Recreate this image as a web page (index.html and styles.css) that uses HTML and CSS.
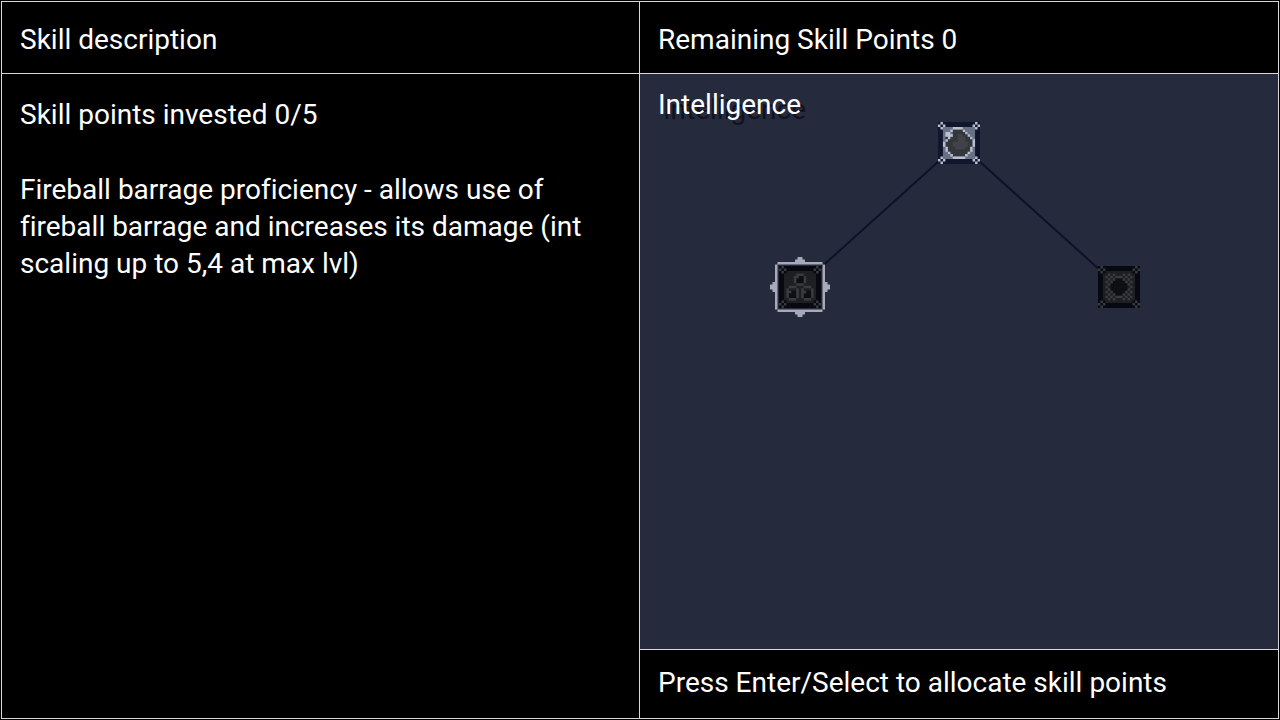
FILE: index.html
```
<!DOCTYPE html>
<html lang="en">
<head>
    <meta charset="UTF-8">
    <meta name="viewport" content="width=device-width, initial-scale=1.0">
    <title>Skill Tree</title>
    <link rel="stylesheet" href="styles.css">
</head>
<body>
    <main class="screen">
        <section class="panel description">
            <h1 class="bar">Skill description</h1>
            <div class="details">
                <p>Skill points invested 0/5</p>
                <p>Fireball barrage proficiency - allows use of fireball barrage and increases its damage (int scaling up to 5,4 at max lvl)</p>
            </div>
        </section>

        <section class="panel">
            <h2 class="bar">Remaining Skill Points 0</h2>
            <div class="tree">
                <h3 class="tree-title">Intelligence</h3>
                <svg class="links" aria-hidden="true">
                    <line x1="50%" y1="12%" x2="25%" y2="37%"/>
                    <line x1="50%" y1="12%" x2="75%" y2="37%"/>
                </svg>

                <button class="node fireball" aria-label="Fireball">
                    <svg viewBox="0 0 17 17">
                        <path class="frame" d="M0 0h17v17h-17z"/>
                        <path class="plate" d="M2 2h13v13h-13z"/>
                        <path class="ball" d="M6 3h5v1h1v1h1v1h1v5h-1v1h-1v1h-1v1h-5v-1h-1v-1h-1v-1h-1v-5h3v-2h-1z"/>
                        <path class="core" d="M8 5h2v1h1v2h1v2h-1v1h-4v-1h-1v-2h2z"/>
                        <path class="line" d="M6 2.5h4M5 3.5h1M10 3.5h1M3 4.5h2M11 4.5h1M3 5.5h3M12 5.5h1M4 6.5h1M13 6.5h1M3 7.5h1M14 7.5h1M2 8.5h1M14 8.5h1M2 9.5h1M14 9.5h1M3 10.5h1M13 10.5h1M3 11.5h1M13 11.5h1M4 12.5h1M12 12.5h1M5 13.5h1M11 13.5h1M6 14.5h5"/>
                        <path class="line" d="M1 .5h1M0 1.5h1M2 1.5h1M1 2.5h1M15 .5h1M14 1.5h1M16 1.5h1M15 2.5h1M1 14.5h1M0 15.5h1M2 15.5h1M1 16.5h1M15 14.5h1M14 15.5h1M16 15.5h1M15 16.5h1"/>
                    </svg>
                </button>

                <button class="node locked barrage" aria-label="Fireball barrage">
                    <svg viewBox="0 0 17 17">
                        <path class="frame" d="M0 0h17v17h-17z"/>
                        <path class="plate" d="M3 2h11v1h1v11h-1v1h-11v-1h-1v-11h1z"/>
                        <path class="ball" d="M7 4h3v3h-3zM4 10h3v3h-3zM10 10h3v3h-3z"/>
                        <path class="line" d="M7 3.5h3M6 4.5h2M10 4.5h1M6 5.5h1M10 5.5h1M6 6.5h1M10 6.5h1M7 7.5h3M4 8.5h3M10 8.5h3M3 9.5h1M7 9.5h1M9 9.5h1M13 9.5h1M3 10.5h2M7 10.5h1M9 10.5h2M13 10.5h1M3 11.5h1M7 11.5h1M9 11.5h1M13 11.5h1M3 12.5h1M7 12.5h1M9 12.5h1M13 12.5h1M4 13.5h3M10 13.5h3"/>
                        <path class="line" d="M1 .5h1M0 1.5h1M2 1.5h1M1 2.5h1M15 .5h1M14 1.5h1M16 1.5h1M15 2.5h1M1 14.5h1M0 15.5h1M2 15.5h1M1 16.5h1M15 14.5h1M14 15.5h1M16 15.5h1M15 16.5h1"/>
                    </svg>
                    <svg class="cursor" viewBox="0 0 24 24">
                        <path d="M3 2h7v-1h1v-1h2v1h1v1h7v1h1v7h1v1h1v2h-1v1h-1v7h-1v1h-7v1h-1v1h-2v-1h-1v-1h-7v-1h-1v-7h-1v-1h-1v-2h1v-1h1v-7h1zM3 3v18h18v-18z" fill-rule="evenodd"/>
                    </svg>
                </button>

                <button class="node locked shield" aria-label="Fire shield">
                    <svg viewBox="0 0 17 17">
                        <path class="frame" d="M0 0h17v17h-17z"/>
                        <path class="plate" d="M3 2h11v1h1v11h-1v1h-11v-1h-1v-11h1z"/>
                        <path class="ball" d="M7 5h3v1h1v1h1v3h-1v1h-1v1h-3v-1h-1v-1h-1v-3h1v-1h1z"/>
                        <path class="line" d="M4 3.5h1M6 3.5h1M10 3.5h1M12 3.5h1M3 4.5h1M5 4.5h1M7 4.5h3M11 4.5h1M13 4.5h1M4 5.5h1M6 5.5h1M10 5.5h1M12 5.5h1M3 6.5h1M5 6.5h1M11 6.5h1M13 6.5h1M4 7.5h1M12 7.5h1M3 8.5h1M13 8.5h1M4 9.5h1M12 9.5h1M3 10.5h1M5 10.5h1M11 10.5h1M13 10.5h1M4 11.5h1M6 11.5h1M10 11.5h1M12 11.5h1M3 12.5h1M5 12.5h1M7 12.5h3M11 12.5h1M13 12.5h1M4 13.5h1M6 13.5h1M10 13.5h1M12 13.5h1"/>
                        <path class="line" d="M1 .5h1M0 1.5h1M2 1.5h1M1 2.5h1M15 .5h1M14 1.5h1M16 1.5h1M15 2.5h1M1 14.5h1M0 15.5h1M2 15.5h1M1 16.5h1M15 14.5h1M14 15.5h1M16 15.5h1M15 16.5h1"/>
                    </svg>
                </button>
            </div>
            <p class="bar hint">Press Enter/Select to allocate skill points</p>
        </section>
    </main>
</body>
</html>
```
FILE: styles.css
```
* {
    box-sizing: border-box;
}

body {
    margin: 0;
    padding: 1px;
    background-color: #000;
    color: #fff;
    font-family: Roboto, "Liberation Sans", sans-serif;
    font-size: 28px;
    font-variant-ligatures: none;
    line-height: 37px;
}

h1, h2, h3, p {
    margin: 0;
    font-size: inherit;
    font-weight: normal;
}

.screen {
    display: grid;
    grid-template-columns: 1fr 1fr;
    min-height: calc(100vh - 2px);
    border: 1px solid #d8d8d8;
}

.panel {
    display: flex;
    flex-direction: column;
}

.description {
    border-right: 1px solid #d8d8d8;
}

.bar {
    padding: 19px 18px 15px;
    border-bottom: 1px solid #d8d8d8;
}

.hint {
    padding: 14px 18px 17px;
    border-top: 1px solid #d8d8d8;
    border-bottom: none;
}

.details {
    display: flex;
    flex-direction: column;
    gap: 38px;
    padding: 22px 18px;
}

.tree {
    position: relative;
    flex: 1;
    padding: 12px 18px;
    background-color: #252a3d;
}

.tree-title {
    text-shadow: 5px 5px 0 #10131d;
}

.links {
    position: absolute;
    inset: 0;
    width: 100%;
    height: 100%;
    stroke: #0d1228;
    stroke-width: 2;
}

.node {
    position: absolute;
    width: 42px;
    height: 42px;
    padding: 0;
    border: none;
    background: none;
    transform: translate(-50%, -50%);
    cursor: pointer;
}

.node svg {
    display: block;
    width: 100%;
    height: 100%;
}

.fireball {
    left: 50%;
    top: 12%;
}

.barrage {
    left: 25%;
    top: 37%;
}

.shield {
    left: 75%;
    top: 37%;
}

.frame {
    fill: #10162d;
}

.plate {
    fill: #687085;
}

.ball {
    fill: #34363b;
}

.core {
    fill: #414348;
}

.line {
    stroke: #b9bfcd;
}

.locked .frame {
    fill: #070911;
}

.locked .plate {
    fill: #1d1f22;
}

.locked .ball {
    fill: #0e0f11;
}

.locked .line {
    stroke: #393b3f;
}

/* selection frame, sits around the active node */
.node .cursor {
    position: absolute;
    left: -9px;
    top: -9px;
    width: 60px;
    height: 60px;
    fill: #a9a9ba;
}
```
